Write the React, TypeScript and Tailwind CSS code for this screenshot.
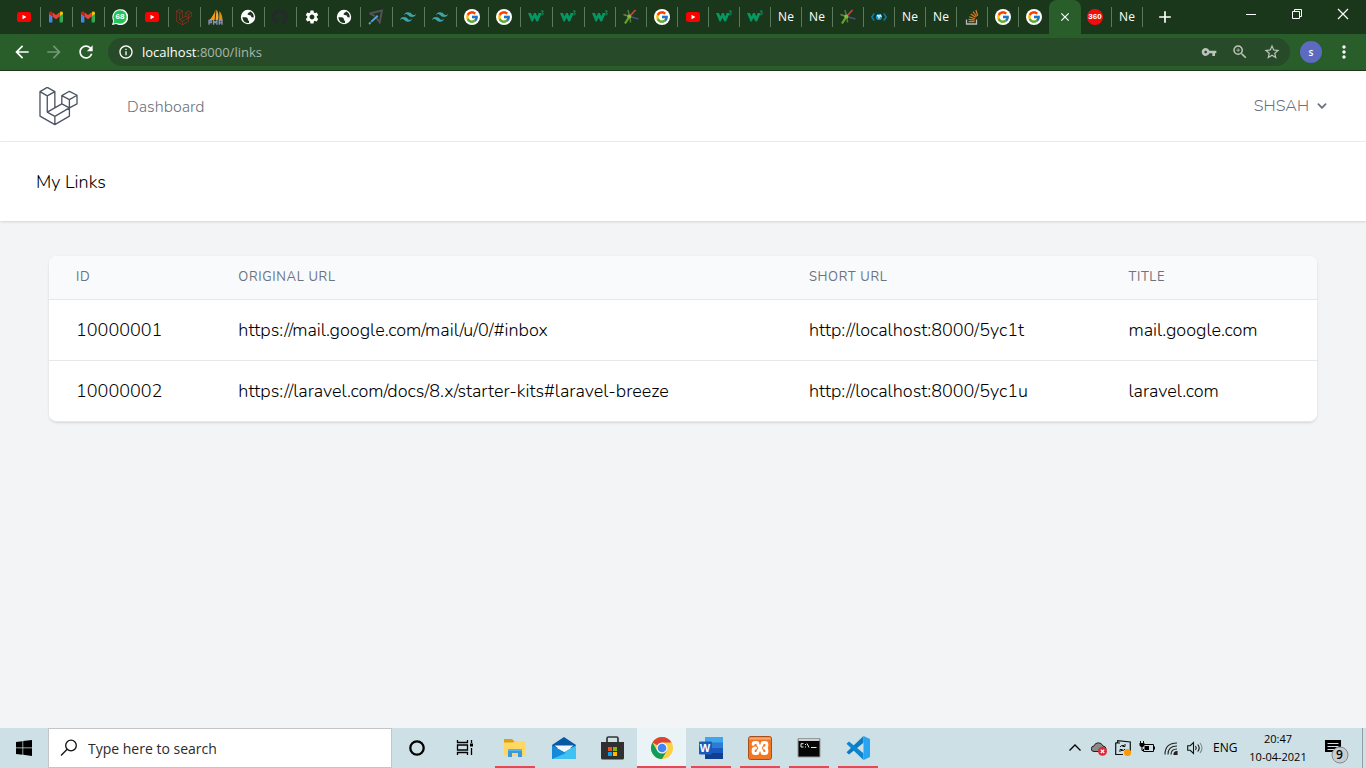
import type { ReactNode } from 'react';
import { FaGithub, FaLaravel } from 'react-icons/fa';
import { FcGoogle } from 'react-icons/fc';
import { SiTailwindcss } from 'react-icons/si';
import {
  MdAdd,
  MdArrowBack,
  MdArrowForward,
  MdClose,
  MdInfoOutline,
  MdMoreVert,
  MdRefresh,
  MdSettings,
  MdStarBorder,
  MdVpnKey,
  MdZoomIn,
} from 'react-icons/md';

const YouTube = () => (
  <svg viewBox="0 0 16 16" className="size-4">
    <rect x="1" y="3" width="14" height="10" rx="2.500" fill="#f00" />
    <path d="M6.500 5.700v4.600L10.400 8z" fill="#fff" />
  </svg>
);

const Gmail = () => (
  <svg viewBox="0 0 16 16" className="size-4">
    <path d="M1 4.200v8.300c0 .6.4 1 1 1h2.400V7z" fill="#4285f4" />
    <path d="M15 4.200v8.300c0 .6-.4 1-1 1h-2.400V7z" fill="#34a853" />
    <path d="M11.600 4v3.600L15 5V4c0-1.500-1.700-2-2.700-1.200z" fill="#fbbc04" />
    <path d="M4.400 7.600V3.300L8 6l3.600-2.700v4.300L8 10.300z" fill="#ea4335" />
    <path d="M1 4v1l3.400 2.600V3.300l-.7-.5C2.700 2 1 2.500 1 4z" fill="#c5221f" />
  </svg>
);

const WhatsApp = () => (
  <span className="relative flex size-4 items-center justify-center">
    <svg viewBox="0 0 16 16" className="absolute inset-0 size-4">
      <path d="M0 16l1.200-4.200A8 8 0 1 1 4.200 15z" fill="#fff" />
      <circle cx="8" cy="8" r="6.700" fill="#20c655" />
      <path d="M1.400 14.600l.9-3.500 2.600 2.600z" fill="#20c655" />
    </svg>
    <span className="relative font-['Liberation_Sans',sans-serif] text-[8px] leading-none font-bold text-white">68</span>
  </span>
);

const PhpMyAdmin = () => (
  <svg viewBox="0 0 16 16" className="size-4">
    <path d="M7.500 .5C6.500 4 4.500 7.500 1.500 11h5.200z" fill="#f89c0e" />
    <path d="M8.500 .5c1.600 2.500 2.400 6 1.700 10.500H7.600z" fill="#f5a63a" />
    <path d="M11.500 2c2 2.500 3 5.500 3 9h-3.500z" fill="#e08e0b" />
    <path d="M1 15.700v-4.200h2.200v2.200H1M5.500 15.700v-4l1.700 2 1.700-2v4M11.300 15.700v-4.200h2.700v4.200M11.300 13.900h2.700" fill="none" stroke="#8f93b8" strokeWidth="1.300" />
  </svg>
);

const Globe = () => (
  <svg viewBox="0 0 16 16" className="size-4">
    <circle cx="8" cy="8" r="7.200" fill="#fff" />
    <path d="M2.300 8.200h3.500q2 0 2 1.800t1.200 1.700v2.300q-5.500.5-6.700-5.800zM10.300 2.500L8 4.300q-1.200 1.500.8 1.700 2.500 0 2.700 2.200l2.200.2q.2-4.500-3.400-5.900z" fill="#1b371b" />
  </svg>
);

const Google = () => (
  <span className="flex size-4 items-center justify-center rounded-full bg-white">
    <FcGoogle className="size-[14px]" />
  </span>
);

const Cursor = () => (
  <svg viewBox="0 0 16 16" className="size-4">
    <path d="M1.500 4.500L14 1.500l-2.300 12L8.500 9M1.500 4.500L7 7.200" fill="none" stroke="#555159" strokeWidth="1.900" />
    <path d="M1 15L10 6.500" stroke="#52a8ee" strokeWidth="1.800" strokeDasharray="2.200 .8 9" />
  </svg>
);

const W3 = () => (
  <svg viewBox="0 0 16 16" className="size-4">
    <path d="M0 4h3l1.400 3.500L6 4h1.800l1.500 3.500L10.700 4h3L10 12.500H8.500L6.400 8.700 4.800 12.500H3.500z" fill="#059862" />
    <path d="M13 2h2.400l-1.300 1.600q1.600.3 1.200 1.500t-2.200.5" fill="none" stroke="#059862" strokeWidth="1" />
  </svg>
);

const Burst = () => (
  <svg viewBox="0 0 16 16" className="size-4" fill="none" strokeWidth="1.500">
    <path d="M6.500 7.500L12.500 1" stroke="#c5473c" strokeWidth="1.800" />
    <path d="M6.500 7.500L.5 5.500" stroke="#7b7b3c" />
    <path d="M6.500 7.500L5 1" stroke="#4d7358" />
    <path d="M6.500 7.500l9 2.500" stroke="#4f4d80" strokeWidth="1.800" />
    <path d="M6.500 7.500l-4.500 7" stroke="#69a52d" strokeWidth="2.200" />
    <path d="M7 7.500l.5 6" stroke="#4d8535" />
    <circle cx="6.300" cy="7.600" r="2" fill="#86b93c" />
  </svg>
);

const DevGlobe = () => (
  <svg viewBox="0 0 16 16" className="size-4" fill="none" stroke="#087caa">
    <path d="M3.200 4.300L.8 8l2.400 3.700M12.800 4.300L15.200 8l-2.400 3.700" strokeWidth="1.500" />
    <circle cx="8" cy="8" r="3.100" fill="#0b9bd0" stroke="none" />
    <path d="M6 6.500l2 .5v2.500M9 5.500l.5 1.500 1 .5" stroke="#e9faff" strokeWidth="1.300" />
  </svg>
);

const Three60 = () => (
  <span className="flex size-4 items-center justify-center rounded-full bg-[#f20d0d] font-['Liberation_Sans',sans-serif] text-[8px] leading-none font-bold text-white">
    360
  </span>
);

const Ne = () => <span className="w-4 overflow-hidden text-[12px] leading-4 text-white">Ne</span>;

const Laravel = () => <FaLaravel className="size-4 text-[#b52c22]" />;
const Tailwind = () => <SiTailwindcss className="size-4 text-[#3fa5ac]" />;
const Octo = () => <FaGithub className="size-4 text-[#24292e]" />;
const Gear = () => <MdSettings className="size-4 text-white" />;
const Stack = () => (
  <svg viewBox="0 0 16 16" className="size-4" fill="none">
    <path d="M2.500 10.500v4.500h10v-4.500" stroke="#b7bbb9" strokeWidth="1.300" />
    <path d="M4.500 12.700h6M4.600 10.400l6 .8M5.200 7.800l5.700 2M6.700 5l5 3.300M9 2.700l3.700 4.800M11.900 1l1.800 5.700" stroke="#e87922" strokeWidth="1.200" />
  </svg>
);

type Tab = { name: string; icon: () => ReactNode };
const tab = (name: string, icon: () => ReactNode): Tab => ({ name, icon });

const firstTabs: Tab[] = [
  tab('YouTube', YouTube), tab('Gmail', Gmail), tab('Gmail', Gmail), tab('WhatsApp', WhatsApp), tab('YouTube', YouTube),
  tab('Laravel', Laravel), tab('phpMyAdmin', PhpMyAdmin), tab('Site', Globe), tab('GitHub', Octo), tab('Settings', Gear),
  tab('Site', Globe), tab('Cursor', Cursor), tab('Tailwind CSS', Tailwind), tab('Tailwind CSS', Tailwind),
  tab('Google', Google), tab('Google', Google), tab('W3', W3), tab('W3', W3),
];

const nextTabs: Tab[] = [
  tab('W3', W3), tab('Burst', Burst), tab('Google', Google), tab('YouTube', YouTube), tab('W3', W3), tab('W3', W3),
  tab('New tab', Ne), tab('New tab', Ne), tab('Burst', Burst), tab('Developer', DevGlobe), tab('New tab', Ne),
  tab('New tab', Ne), tab('Stack Overflow', Stack), tab('Google', Google), tab('Google', Google),
];

function TabStrip() {
  return (
    <div className="flex h-[34px] bg-[#1b371b]">
      <div className="flex min-w-0 overflow-hidden pl-2">
        {firstTabs.map(({ name, icon: Icon }, i) => (
          <button key={i} aria-label={name} className="flex w-8 shrink-0 items-center">
            <span className={`flex h-5 w-full items-center pl-[7px] ${i > 0 ? 'border-l border-[#5b7a5b]' : 'ml-px'}`}><Icon /></span>
          </button>
        ))}
        {nextTabs.map(({ name, icon: Icon }, i) => (
          <button key={i} aria-label={name} className="flex w-[31px] shrink-0 items-center">
            <span className="flex h-5 w-full items-center border-l border-[#5b7a5b] pl-[7px]"><Icon /></span>
          </button>
        ))}
        <button aria-label="Close tab" className="flex w-8 shrink-0 items-center justify-center rounded-t-lg bg-[#295e2b] text-white">
          <MdClose className="size-[14px]" />
        </button>
        <button aria-label="360" className="flex w-[30px] shrink-0 items-center pl-1.5">
          <Three60 />
        </button>
        <button aria-label="New tab" className="flex w-8 shrink-0 items-center">
          <span className="flex h-5 w-full items-center border-x border-[#5b7a5b] pl-[7px]"><Ne /></span>
        </button>
        <button aria-label="Add tab" className="flex w-11 shrink-0 items-center justify-center text-white">
          <MdAdd className="size-5" />
        </button>
      </div>
      <div className="ml-auto flex h-7 text-white">
        <button aria-label="Minimize" className="flex w-[46px] items-center justify-center">
          <svg viewBox="0 0 12 12" className="size-3"><path d="M1 6.500h10" stroke="currentColor" /></svg>
        </button>
        <button aria-label="Restore" className="flex w-[46px] items-center justify-center">
          <svg viewBox="0 0 12 12" className="size-3" fill="none" stroke="currentColor"><path d="M1.500 3.500h7v7h-7zM3.500 3.500v-2h7v7h-2" /></svg>
        </button>
        <button aria-label="Close" className="flex w-[46px] items-center justify-center">
          <svg viewBox="0 0 12 12" className="size-3"><path d="M1 1l10 10M11 1L1 11" stroke="currentColor" strokeWidth="1.200" /></svg>
        </button>
      </div>
    </div>
  );
}

function Toolbar() {
  return (
    <div className="flex h-[37px] items-center border-b border-[#1b371b] bg-[#295e2b] pl-3 text-white">
      <div className="flex gap-3">
        <button aria-label="Back"><MdArrowBack className="size-5" /></button>
        <button aria-label="Forward"><MdArrowForward className="size-5 text-[#769777]" /></button>
        <button aria-label="Reload"><MdRefresh className="size-5" /></button>
      </div>
      <div className="ml-3 flex h-7 min-w-0 flex-1 items-center rounded-full bg-[#274a29] pr-[9px] pl-2.5">
        <MdInfoOutline className="size-4 shrink-0" />
        <a href="#" className="ml-2 pt-0.5 text-[13px] text-[#a9b7a9]"><span className="text-white">localhost</span>:8000/links</a>
        <div className="ml-auto flex items-center gap-3.5 text-[#bcc4bc]">
          <button aria-label="Passwords"><MdVpnKey className="size-4" /></button>
          <button aria-label="Zoom"><MdZoomIn className="size-[18px]" /></button>
          <button aria-label="Bookmark"><MdStarBorder className="size-[18px]" /></button>
        </div>
      </div>
      <button aria-label="Profile" className="ml-2.5 flex size-[22px] items-center justify-center rounded-full bg-[#5c6bc0] text-[10px] leading-none font-semibold">s</button>
      <button aria-label="Menu" className="mr-3 ml-3"><MdMoreVert className="size-5" /></button>
    </div>
  );
}

const links = [
  { id: '10000001', url: 'https://mail.google.com/mail/u/0/#inbox', short: 'http://localhost:8000/5yc1t', title: 'mail.google.com' },
  { id: '10000002', url: 'https://laravel.com/docs/8.x/starter-kits#laravel-breeze', short: 'http://localhost:8000/5yc1u', title: 'laravel.com' },
];

function LaravelMark() {
  return (
    <svg viewBox="118 50 118 118" className="size-[39px]" fill="none" stroke="#4b5563" strokeWidth="4" strokeLinejoin="round">
      <path d="M143 51l23 13v50M143 51l-22 13v74l45 26 44-26V88M121 64l22 13 23-13M143 77v49l23 13v25M143 126l44-25 23 12-44 26M187 101V76l23-13 23 12v26l-23 12M187 76l23 12 23-13" />
    </svg>
  );
}

function Page() {
  return (
    <div className="flex-1 bg-[#f3f4f6] font-[Nunito,Lato,sans-serif] font-light text-black">
      <nav className="flex h-[71px] items-center border-b border-[#eceef0] bg-white pr-[35px] pl-[39px] text-[#6b7280]">
        <a href="#" aria-label="Home"><LaravelMark /></a>
        <a href="#" className="ml-[49px] pt-0.5 text-[16px]">Dashboard</a>
        <button className="ml-auto flex items-center gap-1 text-[16px]">
          SHSAH
          <svg viewBox="0 0 20 20" className="size-[18px]" fill="currentColor">
            <path fillRule="evenodd" d="M5.293 7.293a1 1 0 011.414 0L10 10.586l3.293-3.293a1 1 0 111.414 1.414l-4 4a1 1 0 01-1.414 0l-4-4a1 1 0 010-1.414z" />
          </svg>
        </button>
      </nav>
      <header className="flex h-[79px] items-center bg-white px-9 pt-0.5 shadow">
        <h1 className="text-[18px]">My Links</h1>
      </header>
      <main className="px-[49px] pt-[35px]">
        <div className="overflow-hidden rounded-lg border-b border-gray-200 shadow">
          <table className="w-full table-fixed bg-white text-left">
            <thead className="bg-[#f9fafb] text-[13px] tracking-wider text-[#6b7280] uppercase">
              <tr className="h-[43px]">
                <th scope="col" className="w-[12.8%] px-[27px] font-normal">ID</th>
                <th scope="col" className="w-[45%] px-[27px] font-normal">Original URL</th>
                <th scope="col" className="w-[25.2%] px-[27px] font-normal">Short URL</th>
                <th scope="col" className="px-[27px] font-normal">Title</th>
              </tr>
            </thead>
            <tbody className="text-[18px]">
              {links.map((l) => (
                <tr key={l.id} className="h-[61px] border-t border-gray-200">
                  <td className="px-[27px] pt-0.5">{l.id}</td>
                  <td className="px-[27px] pt-0.5 whitespace-nowrap">{l.url}</td>
                  <td className="px-[27px] pt-0.5 whitespace-nowrap">{l.short}</td>
                  <td className="px-[27px] pt-0.5">{l.title}</td>
                </tr>
              ))}
            </tbody>
          </table>
        </div>
      </main>
    </div>
  );
}

const Cortana = () => (
  <svg viewBox="0 0 24 24" className="size-6"><circle cx="12" cy="12" r="6.700" fill="none" stroke="#000" strokeWidth="2.300" /></svg>
);
const TaskView = () => (
  <svg viewBox="0 0 24 24" className="size-6" fill="none" stroke="#000">
    <path d="M3.500 4v2.500h10V4M3.500 19v-2.500h10V19M3.500 9h10v5h-10zM17.500 4v3M17.500 12v7" strokeWidth="1.300" />
    <path d="M16 7.500h3v3h-3z" fill="#000" stroke="none" />
  </svg>
);
const Explorer = () => (
  <svg viewBox="0 0 24 24" className="size-6">
    <path d="M1 3h8l2 2h11v4H1z" fill="#dca111" />
    <path d="M1 6.500h9L12 5h10.500v15H1z" fill="#ffd764" />
    <path d="M5 21v-8h14v8h-4v-4H9v4z" fill="#3d97db" />
    <path d="M5 13h14v2H5z" fill="#55b5f0" />
  </svg>
);
const Mail = () => (
  <svg viewBox="0 0 24 24" className="size-6">
    <path d="M0 9L12 1l12 8v3H0z" fill="#0858a8" />
    <path d="M2.500 9.500h19L12 17z" fill="#f4f8fb" />
    <path d="M0 9.500l12 7 12-7V23H0z" fill="#28a8ea" />
    <path d="M0 23L24 9.500V23z" fill="#3fc1f3" />
    <path d="M0 9.500L14 17 0 23z" fill="#1689d8" />
  </svg>
);
const Store = () => (
  <svg viewBox="0 0 24 24" className="size-6">
    <path d="M6 7V2.500Q6 1 7.500 1h8Q17 1 17 2.500V7" fill="none" stroke="#333" strokeWidth="1.700" />
    <path d="M0 6h23v16q0 1.500-1.500 1.500h-20Q0 23.500 0 22z" fill="#303030" />
    <path d="M7 11h4v4H7z" fill="#f25022" /><path d="M12 11h4v4h-4z" fill="#7fba00" />
    <path d="M7 16h4v4H7z" fill="#00a4ef" /><path d="M12 16h4v4h-4z" fill="#ffb900" />
  </svg>
);
const Chrome = () => (
  <svg viewBox="0 0 24 24" className="size-6">
    <circle cx="12" cy="12" r="11" fill="#fbd043" />
    <path d="M12 12L2.470 6.500A11 11 0 0 1 21.530 6.500H12z" fill="#db4437" />
    <path d="M2.470 6.500A11 11 0 0 0 12 23l4.800-8.200L12 12 7.200 14.800z" fill="#109d58" />
    <circle cx="12" cy="12" r="5.500" fill="#f5f5f5" /><circle cx="12" cy="12" r="4.300" fill="#4285f4" />
  </svg>
);
const Word = () => (
  <span className="relative flex size-6 items-center">
    <svg viewBox="0 0 24 24" className="absolute inset-0 size-6">
      <path d="M6 1h18v6H6z" fill="#41a5ee" /><path d="M6 6.500h18V12H6z" fill="#2b7cd3" />
      <path d="M6 12h18v5.500H6z" fill="#185abd" /><path d="M6 17h18v6H6z" fill="#103f91" />
      <rect x="0" y="5.500" width="13" height="13" rx="1" fill="#185abd" />
    </svg>
    <span className="relative w-[13px] text-center font-['Liberation_Sans',sans-serif] text-[11px] leading-none font-bold text-white">W</span>
  </span>
);
const Xampp = () => (
  <svg viewBox="0 0 24 24" className="size-6" strokeLinejoin="round" strokeLinecap="round">
    <rect x=".5" y=".5" width="23" height="23" rx="2" fill="#f37623" stroke="#a84f19" />
    <path d="M1.500 1.500h21v2h-21z" fill="#f8ab7a" />
    <path d="M5.200 8.300Q5.200 6.500 7 6.500h1.500q1.500 0 1.500 2L14 15.500q0 2 1.500 2H17q1.800 0 1.800-1.800v-1.500Q18.800 12 16.500 12q2.300 0 2.300-2.200V8.300q0-1.800-1.800-1.800h-1.500q-1.500 0-1.500 2L10 15.500q0 2-1.500 2H7q-1.800 0-1.800-1.800v-1.500Q5.200 12 7.500 12" fill="none" stroke="#fff" strokeWidth="3" />
  </svg>
);
const Terminal = () => (
  <svg viewBox="0 0 24 24" className="size-6">
    <path d="M1 2.500h22v18.500H1z" fill="#050505" stroke="#9a9a9a" /><path d="M1.500 3h21v2h-21z" fill="#ccd0d2" />
    <path d="M6.500 7.700H4v3.300h2.500M8.500 8v1M8.500 10.500v1M10 7.500l2 4M14 11.500h5.500" fill="none" stroke="#e8e8e8" />
  </svg>
);
const VsCode = () => (
  <svg viewBox="0 0 24 24" className="size-6">
    <path d="M17.500 0v6.800L3 18.500l-2.500-2.200z" fill="#0a7cc4" />
    <path d="M.500 7.700L3 5.500l14.500 11.700V24z" fill="#0c86d2" />
    <path d="M17.500 0L24 3v18l-6.500 3z" fill="#27a4f2" />
  </svg>
);

const apps: { name: string; icon: () => ReactNode; state: 'idle' | 'open' | 'active' }[] = [
  { name: 'Cortana', icon: Cortana, state: 'idle' },
  { name: 'Task view', icon: TaskView, state: 'idle' },
  { name: 'File Explorer', icon: Explorer, state: 'open' },
  { name: 'Mail', icon: Mail, state: 'idle' },
  { name: 'Store', icon: Store, state: 'idle' },
  { name: 'Chrome', icon: Chrome, state: 'active' },
  { name: 'Word', icon: Word, state: 'open' },
  { name: 'XAMPP', icon: Xampp, state: 'open' },
  { name: 'Command Prompt', icon: Terminal, state: 'open' },
  { name: 'Visual Studio Code', icon: VsCode, state: 'open' },
];

function Tray() {
  return (
    <div className="ml-auto flex items-center">
      <button aria-label="Hidden icons" className="flex w-6 justify-center">
        <svg viewBox="0 0 16 16" className="size-4"><path d="M2.500 10.500L8 5l5.500 5.500" fill="none" stroke="#000" strokeWidth="1.300" /></svg>
      </button>
      <button aria-label="OneDrive" className="flex w-6 justify-center">
        <svg viewBox="0 0 16 16" className="size-4">
          <path d="M3 11.500Q.3 11.500.3 8.800T3 6q1-3.200 4.300-3.200T12 6q3 .3 3 3t-2.500 2.500z" fill="#8b8b8b" stroke="#222" />
          <circle cx="11.500" cy="11.300" r="4.500" fill="#df2935" /><path d="M9.800 9.600l3.400 3.400M13.200 9.600L9.800 13" stroke="#fff" strokeWidth="1.300" />
        </svg>
      </button>
      <button aria-label="Updates" className="flex w-6 justify-center">
        <svg viewBox="0 0 16 16" className="size-4">
          <path d="M8 14.500H.700V3l2-.3v-2L15.300 2v9M.700 3H5" fill="none" stroke="#111" strokeWidth="1.200" />
          <path d="M5 7q1-2 4-1.500M10 4v2.500H7.500M10 9q-1 2-4 1.500M5 12V9.500h2.500" fill="none" stroke="#111" />
          <circle cx="12.500" cy="12.500" r="3.500" fill="#ff9800" />
        </svg>
      </button>
      <button aria-label="Battery" className="flex w-6 justify-center">
        <svg viewBox="0 0 16 16" className="size-4">
          <path d="M5 4.500h9.500v7H4.500V9M15.500 6.500v3M1.500 1v2.500M4.500 1v2.500M3 7v3.500h2" fill="none" stroke="#000" />
          <path d="M.500 3h5v2.500L4 7H2L.500 5.500zM5.500 6H10v4H5.500z" fill="#000" />
        </svg>
      </button>
      <button aria-label="Wi-Fi" className="flex w-6 justify-center">
        <svg viewBox="0 0 16 16" className="size-4" fill="none" stroke="#222" strokeWidth="1.100">
          <path d="M2 14.500Q2 3 14 3M5 14.500Q5 6 14 6M8 14.500Q8 9 14 9" /><path d="M11 14.500q0-3 3-3v3z" fill="#222" />
        </svg>
      </button>
      <button aria-label="Volume" className="flex w-6 justify-center">
        <svg viewBox="0 0 16 16" className="size-4" fill="none" stroke="#111" strokeWidth="1.100">
          <path d="M.700 5.700h2.500L6.500 2.500v11L3.200 10.300H.700zM8.500 6q1.500 2 0 4M10.700 4.500q3 3.500 0 7" /><path d="M13 3q4 5 0 10" stroke="#7c898d" />
        </svg>
      </button>
      <button className="ml-1.5 w-6 text-center text-[12px]">ENG</button>
      <button className="ml-2.5 w-[62px] text-center text-[11px] leading-[18px] whitespace-nowrap">20:47<br />10-04-2021</button>
      <button aria-label="Notifications" className="relative mr-3 ml-[15px] h-10 w-[26px]">
        <svg viewBox="0 0 26 40" className="h-10 w-[26px]">
          <path d="M1 12h16v12h-5v3l-3-3H1z" fill="#000" /><path d="M3.500 15.500h11M3.500 18.500h11M3.500 21.500h7" stroke="#cde1e6" />
          <circle cx="16" cy="27" r="8" fill="#c8cdcf" stroke="#848b8e" />
        </svg>
        <span className="absolute top-5 left-3 text-[12px] leading-[14px] font-semibold">9</span>
      </button>
      <div className="h-10 w-1 border-l border-[#8d9fa5]" />
    </div>
  );
}

function Taskbar() {
  return (
    <footer className="flex h-10 bg-[#cce0e6] text-black">
      <button aria-label="Start" className="flex w-12 items-center justify-center">
        <svg viewBox="0 0 16 16" className="size-4"><path d="M0 2l6.500-.8v6.400H0zM7.200 1.100L16 0v7.600H7.200zM0 8.300h6.500v6.400L0 13.900zM7.200 8.300H16V16l-8.800-1.200z" /></svg>
      </button>
      <label className="flex w-[344px] items-center border border-[#c3c6c8] bg-white pl-[11px]">
        <svg viewBox="0 0 18 18" className="size-[18px] shrink-0" fill="none" stroke="#111" strokeWidth="1.300"><circle cx="11" cy="6.500" r="5.300" /><path d="M7.200 10.300L1 16.500" /></svg>
        <input aria-label="Search" placeholder="Type here to search" className="ml-2.5 w-full min-w-0 bg-transparent text-[14px] outline-none placeholder:text-[#2b2b2b]" />
      </label>
      <div className="flex">
        {apps.map(({ name, icon: Icon, state }) => (
          <button key={name} aria-label={name} className={`flex w-[49px] flex-col items-center ${state === 'active' ? 'bg-[#eaf3f5]' : ''}`}>
            <span className="flex h-[38px] items-center pt-0.5"><Icon /></span>
            <span className={`h-0.5 ${state === 'active' ? 'w-full bg-[#e74856]' : state === 'open' ? 'w-10 bg-[#e74856]' : 'w-10'}`} />
          </button>
        ))}
      </div>
      <Tray />
    </footer>
  );
}

export default function App() {
  return (
    <div className="flex min-h-screen flex-col font-['Segoe_UI','Open_Sans',sans-serif]">
      <TabStrip />
      <Toolbar />
      <Page />
      <Taskbar />
    </div>
  );
}
